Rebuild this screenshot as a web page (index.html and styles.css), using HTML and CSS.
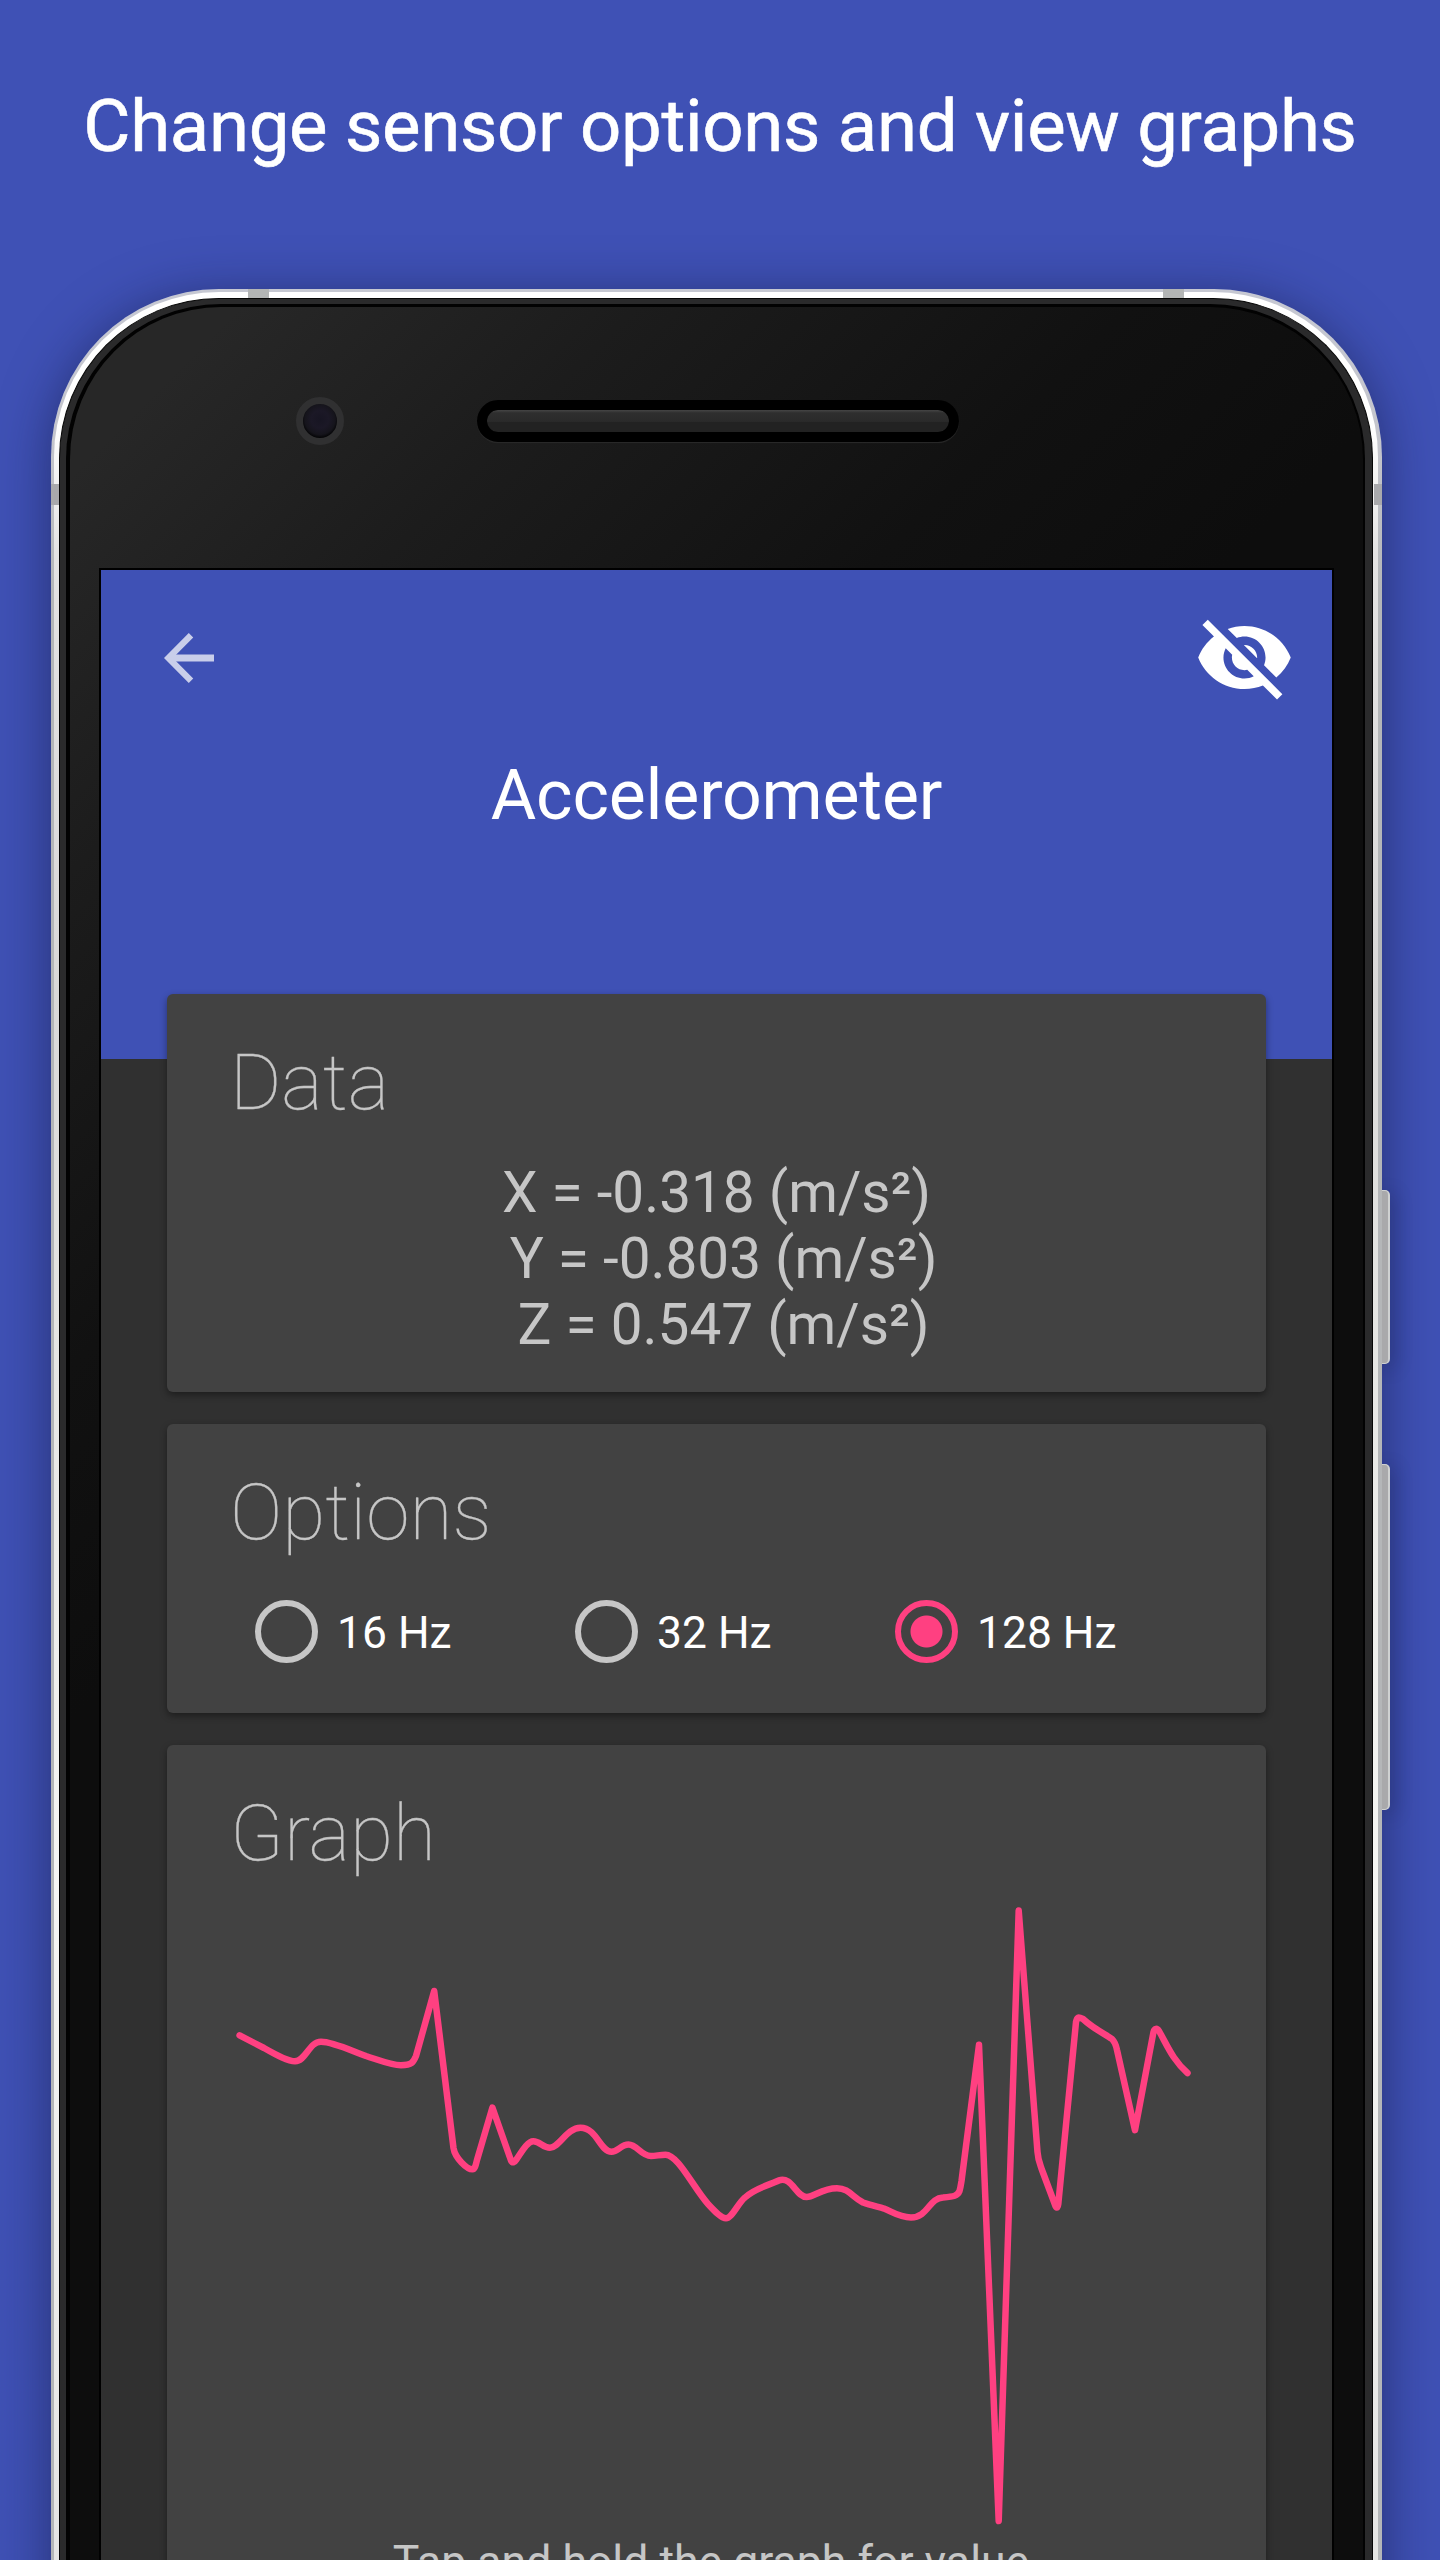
FILE: index.html
```html
<!DOCTYPE html>
<html lang="en">
<head>
<meta charset="utf-8">
<title>Accelerometer</title>
<link rel="stylesheet" href="styles.css">
</head>
<body>
<main class="promo">
  <h1 class="headline">Change sensor options and view graphs</h1>
  <div class="phone">
    <span class="button button-power"></span>
    <span class="button button-volume"></span>
    <div class="rim">
      <div class="bezel">
        <div class="glass">
          <div class="earpiece">
            <span class="camera"></span>
            <span class="speaker"></span>
          </div>
          <div class="screen">
            <header class="app-header">
              <div class="toolbar">
                <svg class="icon-back" viewBox="0 0 50 50" fill="none" stroke="#fff">
                  <path d="M27 2.3 4.4 25 27 47.7" stroke-width="6.3"/>
                  <path d="M6 25H50" stroke-width="6.8"/>
                </svg>
                <svg class="icon-hide" viewBox="0 0 24 24" fill="#fff">
                  <path d="M12 7c2.76 0 5 2.24 5 5 0 .65-.13 1.26-.36 1.83l2.92 2.92c1.51-1.26 2.7-2.89 3.43-4.75-1.73-4.39-6-7.5-11-7.5-1.4 0-2.74.25-3.98.7l2.16 2.16C10.74 7.13 11.35 7 12 7zM2 4.27l2.28 2.28.46.46C3.08 8.3 1.78 10.02 1 12c1.73 4.39 6 7.5 11 7.5 1.55 0 3.03-.3 4.38-.84l.42.42L19.73 22 21 20.73 3.27 3 2 4.27zM7.53 9.8l1.55 1.55c-.05.21-.08.43-.08.65 0 1.66 1.34 3 3 3 .22 0 .44-.03.65-.08l1.55 1.55c-.67.33-1.41.53-2.2.53-2.76 0-5-2.24-5-5 0-.79.2-1.53.53-2.2zm4.31-.78l3.15 3.15.02-.16c0-1.66-1.34-3-3-3l-.17.01z"/>
                </svg>
              </div>
              <h2 class="app-title">Accelerometer</h2>
            </header>
            <div class="cards">
              <section class="card card-data">
                <h3 class="card-title">Data</h3>
                <pre class="readings">X = -0.318 (m/s²)
 Y = -0.803 (m/s²)
 Z = 0.547 (m/s²)</pre>
              </section>
              <section class="card card-options">
                <h3 class="card-title">Options</h3>
                <div class="rates">
                  <span class="rate"><i class="radio"></i>16 Hz</span>
                  <span class="rate"><i class="radio"></i>32 Hz</span>
                  <span class="rate"><i class="radio radio-on"></i>128 Hz</span>
                </div>
              </section>
              <section class="card card-graph">
                <h3 class="card-title">Graph</h3>
                <svg class="chart" viewBox="167 1880 1099 660">
                  <path d="M239.6 2035.3L264 2048C278 2056 288 2061.3 295 2061.3C306 2061 309 2041.7 321 2041.7C333 2041.7 352 2051 366 2056C380 2060.500 392 2065.300 401 2065.300C412 2065.300 413.500 2062 416 2056L434.200 1991L453.500 2148C455 2158 467 2169.300 472.500 2169.300C475 2169.300 476 2164 477 2160L492.400 2107.700L511 2160.500C512.500 2163.500 514.500 2162.500 516 2160C521 2153 527 2141.300 533.300 2141.300C540 2141.300 543 2147.700 550 2147.700C559 2147.700 567 2127.700 580.500 2127.700C597 2127.700 600 2151.700 611.500 2151.700C618 2151.700 621 2144.500 628.500 2144.500C637 2144.500 641 2156 651 2156C656 2156 660 2154.700 665.500 2154.700C678 2154.700 693 2187 708 2204C714 2210.500 721 2218.300 726 2218.300C732 2218.300 738 2203 745 2197.500C755 2188 772 2184 779 2180.300C792 2176 796 2197 806.700 2197C814 2197 822 2188.300 837 2188.300C849 2188.300 852 2197 863 2202.500C870 2205 877 2206.500 884 2208.500C892 2211.500 899 2217.400 911 2217.400C928 2217.400 929 2198 943 2197.400C954 2196.500 957.500 2196 959.500 2191C960.500 2188 961 2184 961.500 2181L979 2044.800L998.700 2521L1018.700 1910.400L1037.500 2152C1038 2160 1040 2164 1042 2170L1055.500 2206C1057 2209 1058 2207 1058.300 2204L1076 2022C1077 2017 1078 2016.500 1083 2019C1095 2030 1107 2035 1112 2039C1114.500 2041.500 1116 2045 1117 2050L1135 2130.200L1153.500 2032C1154.500 2028 1157 2028 1159 2031C1168 2047 1173 2060 1187.500 2073"/>
                </svg>
                <p class="hint">Tap and hold the graph for value</p>
              </section>
            </div>
          </div>
        </div>
      </div>
    </div>
    <span class="band band-top band-tl"></span>
    <span class="band band-top band-tr"></span>
    <span class="band band-side band-l"></span>
    <span class="band band-side band-r"></span>
  </div>
</main>
</body>
</html>
```
FILE: styles.css
```css
* { box-sizing: border-box; }
html, body { margin: 0; }
body { background: #3f51b5; font-family: Roboto, "Liberation Sans", sans-serif; }
h1, h2, h3, p, pre { margin: 0; font-family: inherit; font-weight: 400; }

.promo { width: 1440px; height: 2560px; overflow: hidden; }
.headline {
  height: 289px;
  padding-top: 84px;
  text-align: center;
  white-space: nowrap;
  color: #fff;
  font-size: 72.500px;
  letter-spacing: -.3px;
  line-height: 86px;
  -webkit-text-stroke: .6px #fff;
}

/* Handset */
.phone {
  position: relative;
  z-index: 0;
  width: 1331px;
  height: 2600px;
  margin-left: 51px;
  padding: 3px 4px 0 3px;
  border-radius: 168px 168px 0 0;
  background: linear-gradient(#c6c8d2 0, #c4c5cc 150px, #b4b6b8 300px, #b4b6b8 100%);
  box-shadow: 0 8px 52px rgba(18, 22, 60, .55);
}
.rim {
  height: 100%;
  padding: 6px 5px 0;
  border-radius: 165px 165px 0 0;
  background: linear-gradient(#fff 0, #fff 130px, #e4e3e3 260px, #d9d8d8 700px, #e4e4e2 1000px, #f6f6f4 1600px, #dcdcdc 100%);
}
.bezel {
  height: 100%;
  padding: 5px 7px 0 6px;
  border: solid #050505;
  border-width: 1px 1px 0;
  border-radius: 160px 160px 0 0;
  background: #2a2a2b;
}
.glass {
  height: 100%;
  padding: 0 31px;
  border: solid #020202;
  border-width: 3px 2px 0 4px;
  border-radius: 155px 155px 0 0;
  background: linear-gradient(135deg, #272727 120px, #1c1c1c 400px, #111 750px, #0d0d0d 1000px);
}
.band { position: absolute; background: #b3b5b5; }
.band-top { top: 0; width: 21px; height: 9px; }
.band-side { top: 195px; width: 8px; height: 21px; background: #a9a9ac; }
.band-tl { left: 197px; }
.band-tr { left: 1112px; }
.band-l { left: 0; }
.band-r { right: 0; }
.button {
  position: absolute;
  left: 1328px;
  width: 11px;
  border: solid #cfd1d1;
  border-width: 1px 2px 1px 0;
  border-radius: 0 5px 5px 0;
  background: #a9a9ab;
  box-shadow: 4px 4px 18px rgba(18, 22, 60, .3);
  clip-path: inset(-20px -40px -20px 3px);
}
.button-power { top: 901px; height: 174px; }
.button-volume { top: 1175px; height: 346px; }

.earpiece { display: flex; align-items: center; height: 263px; padding: 0 0 35px 195px; }
.camera {
  width: 48px;
  height: 48px;
  border: 7px solid #303031;
  border-radius: 50%;
  background: radial-gradient(circle at 50% 45%, #171522 0, #1b1826 35%, #15141b 60%, #060608 72%);
}
.speaker {
  width: 482px;
  height: 42px;
  margin-left: 133px;
  border: 10px solid #000;
  border-radius: 21px;
  background: linear-gradient(#454545 0, #2e2e2e 3px, #2a2a2a 52%, #222 56%) padding-box #000;
  box-shadow: 0 1px 1px #2b2b2b;
}

/* App */
.screen {
  width: 1231px;
  height: 2100px;
  background: #303030;
  box-shadow: 0 0 0 2px #000;
}
.app-header { height: 489px; background: #3f51b5; }
.toolbar { display: flex; justify-content: space-between; height: 175px; padding: 37px 37px 0 63px; }
.icon-back { width: 50px; height: 50px; margin-top: 26px; opacity: .72; }
.icon-hide { width: 101px; height: 101px; }
.app-title {
  padding-top: 8px;
  text-align: center;
  color: #fff;
  font-size: 69.800px;
  letter-spacing: -.2px;
  line-height: 84px;
}
.cards { display: flex; flex-direction: column; gap: 32px; margin-top: -65px; padding: 0 66px; }
.card {
  display: flex;
  flex-direction: column;
  border-radius: 6px;
  background: #424242;
  box-shadow: 0 3px 7px rgba(0, 0, 0, .4);
}
.card-data { height: 398px; }
.card-options { height: 289px; }
.card-graph { height: 1000px; }
.card-title {
  height: 135px;
  padding: 42px 0 0 63px;
  color: #c6c6c6;
  font-size: 78.500px;
  font-weight: 100;
  line-height: 92px;
  -webkit-text-stroke: .3px #c6c6c6;
}
.readings { margin-top: 31px; text-align: center; color: #c6c6c6; font-size: 56.700px; line-height: 66px; }
.rates { display: flex; padding: 41px 0 0 88px; color: #fff; font-size: 44.400px; line-height: 66px; }
.rate { display: flex; width: 320px; gap: 19px; }
.radio { width: 63px; height: 63px; border: 6px solid #c6c6c6; border-radius: 50%; }
.radio-on { border-color: #ff4081; background: radial-gradient(circle, #ff4081 15.500px, transparent 16.500px); }
.chart { flex: none; width: 1099px; height: 660px; fill: none; stroke: #ff4081; stroke-width: 6.500px; stroke-linecap: round; stroke-linejoin: round; }
.hint {
  margin-top: -4px;
  padding-right: 11px;
  text-align: center;
  color: #c6c6c6;
  font-size: 44.600px;
  line-height: 52px;
}
```
